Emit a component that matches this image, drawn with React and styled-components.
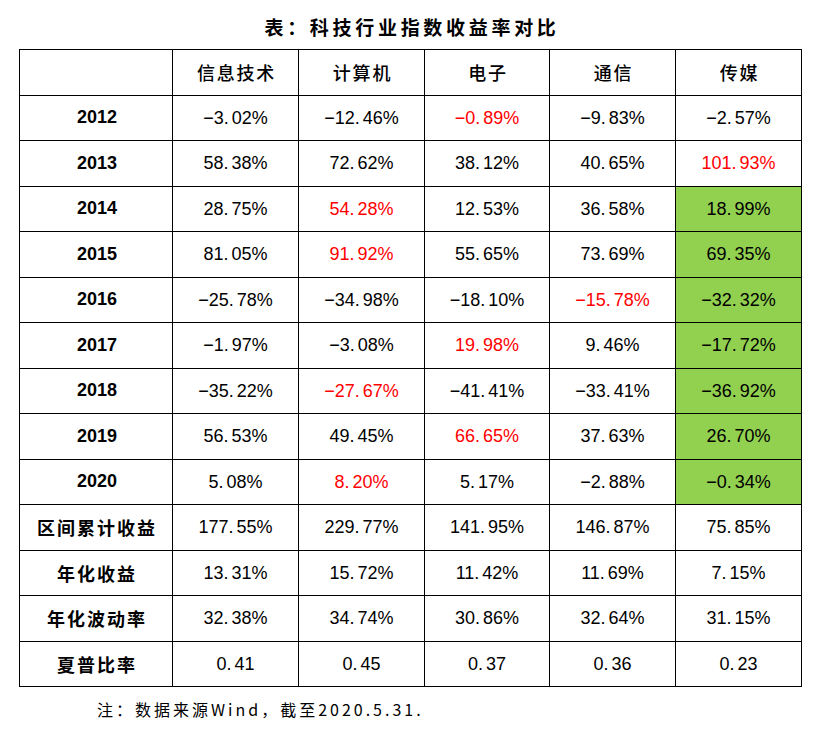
import React from "react";
import styled, { createGlobalStyle } from "styled-components";

const Global = createGlobalStyle`
  html, body { margin: 0; padding: 0; background: #fff; }
  body { font-family: "Liberation Sans", "Noto Sans CJK SC", sans-serif; color: #000; }
`;

const Page = styled.div`
  width: 819px;
  height: 731px;
  box-sizing: border-box;
  padding: 14px 18px 0 19px;
  display: flex;
  flex-direction: column;
`;

const Title = styled.h1`
  margin: 0;
  height: 35px;
  line-height: 26px;
  text-align: center;
  font-family: "Noto Sans CJK SC", sans-serif;
  font-weight: 700;
  font-size: 19px;
  letter-spacing: 3.7px;
  padding-left: 4px;
`;

const Table = styled.table`
  border-collapse: collapse;
  table-layout: fixed;
  width: 782px;
`;

const Row = styled.tr`
  height: 45.5px;
`;

const Cell = styled.td`
  border: 1px solid #000;
  padding: 0;
  text-align: center;
  vertical-align: middle;
  background: ${(p) => (p.$green ? "#92D050" : "#fff")};
  color: ${(p) => (p.$red ? "#FF0000" : "#000")};
  font-family: "Liberation Sans", sans-serif;
  font-size: 18px;
  line-height: 20px;
`;

const HeadCell = styled.th`
  border: 1px solid #000;
  padding: 0 0 0 2px;
  text-align: center;
  vertical-align: middle;
  font-family: "Noto Sans CJK SC", sans-serif;
  font-weight: 500;
  font-size: 18px;
  letter-spacing: 1.8px;
`;

const LabelCell = styled.th`
  border: 1px solid #000;
  padding: 0 0 0 2px;
  text-align: center;
  vertical-align: middle;
  font-family: ${(p) => (p.$year ? '"Liberation Sans", sans-serif' : '"Noto Sans CJK SC", sans-serif')};
  font-weight: ${(p) => (p.$year ? 700 : 600)};
  font-size: 18px;
  letter-spacing: ${(p) => (p.$year ? "0" : "2px")};
`;

const Dot = styled.span`
  margin-right: 3px;
`;

const Note = styled.p`
  margin: 11px 0 0 78px;
  font-family: "Noto Sans CJK SC", sans-serif;
  font-size: 16px;
  letter-spacing: 3px;
  line-height: 22px;
`;

const cols = ["信息技术", "计算机", "电子", "通信", "传媒"];
const widths = [153, 126, 126, 125, 126, 126];

// value, red flag, green flag
const rows = [
  ["2012", true, [["-3.02%"], ["-12.46%"], ["-0.89%", 1], ["-9.83%"], ["-2.57%"]]],
  ["2013", true, [["58.38%"], ["72.62%"], ["38.12%"], ["40.65%"], ["101.93%", 1]]],
  ["2014", true, [["28.75%"], ["54.28%", 1], ["12.53%"], ["36.58%"], ["18.99%", 0, 1]]],
  ["2015", true, [["81.05%"], ["91.92%", 1], ["55.65%"], ["73.69%"], ["69.35%", 0, 1]]],
  ["2016", true, [["-25.78%"], ["-34.98%"], ["-18.10%"], ["-15.78%", 1], ["-32.32%", 0, 1]]],
  ["2017", true, [["-1.97%"], ["-3.08%"], ["19.98%", 1], ["9.46%"], ["-17.72%", 0, 1]]],
  ["2018", true, [["-35.22%"], ["-27.67%", 1], ["-41.41%"], ["-33.41%"], ["-36.92%", 0, 1]]],
  ["2019", true, [["56.53%"], ["49.45%"], ["66.65%", 1], ["37.63%"], ["26.70%", 0, 1]]],
  ["2020", true, [["5.08%"], ["8.20%", 1], ["5.17%"], ["-2.88%"], ["-0.34%", 0, 1]]],
  ["区间累计收益", false, [["177.55%"], ["229.77%"], ["141.95%"], ["146.87%"], ["75.85%"]]],
  ["年化收益", false, [["13.31%"], ["15.72%"], ["11.42%"], ["11.69%"], ["7.15%"]]],
  ["年化波动率", false, [["32.38%"], ["34.74%"], ["30.86%"], ["32.64%"], ["31.15%"]]],
  ["夏普比率", false, [["0.41"], ["0.45"], ["0.37"], ["0.36"], ["0.23"]]],
];

function Num({ v }) {
  const s = v.replace("-", "\u2212");
  const i = s.indexOf(".");
  if (i < 0) return s;
  return (
    <>
      {s.slice(0, i)}
      <Dot>.</Dot>
      {s.slice(i + 1)}
    </>
  );
}

export default function App() {
  return (
    <Page>
      <Global />
      <Title>表：科技行业指数收益率对比</Title>
      <Table>
        <colgroup>
          {widths.map((w, i) => (
            <col key={i} style={{ width: w }} />
          ))}
        </colgroup>
        <thead>
          <Row>
            <HeadCell />
            {cols.map((c) => (
              <HeadCell key={c}>{c}</HeadCell>
            ))}
          </Row>
        </thead>
        <tbody>
          {rows.map(([label, year, cells]) => (
            <Row key={label}>
              <LabelCell $year={year}>{label}</LabelCell>
              {cells.map(([v, red, green], j) => (
                <Cell key={j} $red={!!red} $green={!!green}>
                  <Num v={v} />
                </Cell>
              ))}
            </Row>
          ))}
        </tbody>
      </Table>
      <Note>注：数据来源Wind，截至2020.5.31.</Note>
    </Page>
  );
}
